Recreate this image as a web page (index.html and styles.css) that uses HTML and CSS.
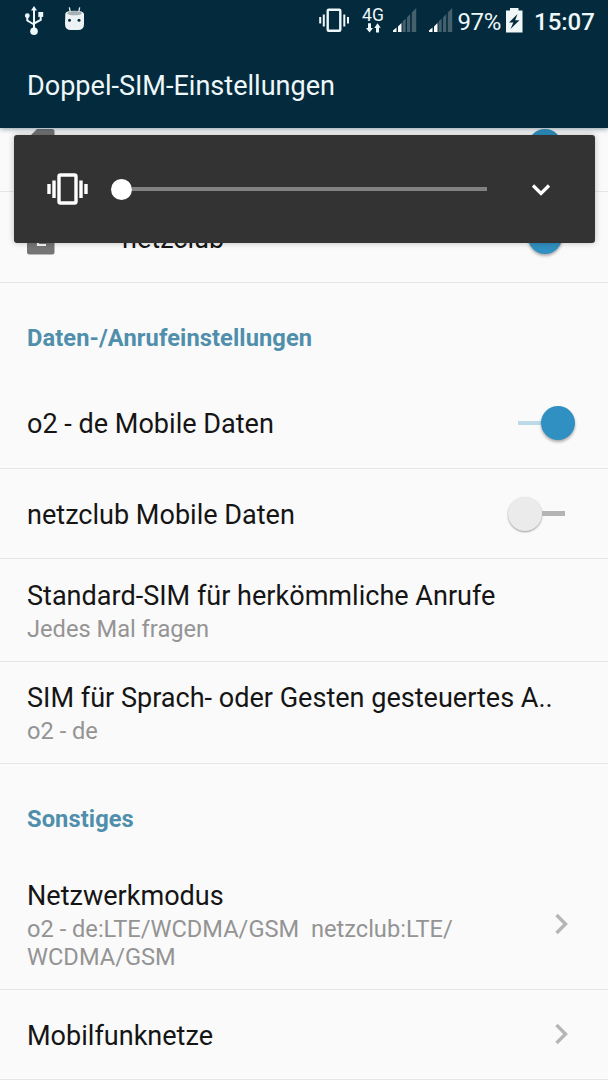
FILE: index.html
```html
<!DOCTYPE html>
<html lang="de">
<head>
<meta charset="utf-8">
<title>Doppel-SIM-Einstellungen</title>
<link rel="stylesheet" href="styles.css">
</head>
<body>
<div class="screen">
  <header class="appbar">
    <div class="status">
      <svg class="usb" width="20" height="32" viewBox="24 5 20 32">
        <g fill="none" stroke="#eef8fa" stroke-width="2">
          <path d="M34 9V30"/><path d="M27.3 16V20.5L34 24.5M40.7 15V20L34 23.5"/>
        </g>
        <g fill="#eef8fa"><path d="M34 6L37 10.5H31Z"/><circle cx="27.3" cy="15.7" r="2.4"/><path d="M38.3 12h4.9v4.9h-4.9z"/><circle cx="34" cy="31.2" r="3.8"/></g>
      </svg>
      <svg class="droid" width="22" height="26" viewBox="63 6 22 26">
        <path d="M69.3 7.3L70.3 12M79.7 7.3L78.7 12" stroke="#e6eef0" stroke-width="1.3"/>
        <path d="M65.3 14Q65.3 10.8 74.4 10.8T84 14V24Q84 30 78 30H71Q65 30 65 24Z" fill="#edf3f4"/>
        <ellipse cx="74.5" cy="13.2" rx="7.4" ry="2.1" fill="#a5b1b6"/>
        <circle cx="69.5" cy="20.3" r="1.5" fill="#062b3d"/><circle cx="79" cy="20.3" r="1.5" fill="#062b3d"/>
      </svg>
      <svg class="vib" width="32" height="26" viewBox="318 8 32 26">
        <rect x="327.7" y="9.7" width="12.6" height="21" rx="1" fill="none" stroke="#eef8fa" stroke-width="2.4"/>
        <path d="M323.8 14.5v12M320.2 17v6.5M344.3 14.5v12M348 17v6.5" stroke="#eef8fa" stroke-width="2"/>
      </svg>
      <div class="net">
        <span>4G</span>
        <svg width="16" height="10" viewBox="364 22.5 16 10"><path d="M367 22.7h3v4.700h2L368.500 32 365 27.400h2zM375 32h3v-4.700h1.700L376.500 22.700 373.300 27.400H375z" fill="#eef8fa"/></svg>
      </div>
      <svg class="sig" width="26" height="26" viewBox="392 7 26 26">
        <path d="M393 32v-1.500l3.500-3v4.500zM398 32v-5.500l3.500-3.500V32z" fill="#fff"/>
        <path d="M402.500 32V21.500l3.200-3v13.500zM407 32V17.500l3.200-3.500v18zM411.800 32V12.500l4.400-4.500v24z" fill="#44606d"/>
      </svg>
      <svg class="sig sig2" width="26" height="26" viewBox="392 7 26 26">
        <path d="M393 32v-1.500l3.500-3v4.500zM398 32v-5.500l3.500-3.500V32z" fill="#fff"/>
        <path d="M402.500 32V21.500l3.200-3v13.500zM407 32V17.500l3.200-3.500v18zM411.800 32V12.500l4.400-4.500v24z" fill="#44606d"/>
      </svg>
      <span class="pct">97%</span>
      <svg class="bat" width="17" height="26" viewBox="506 8 17 26">
        <path d="M506 10.500h4V8h8.500v2.500h4V32.500H506z" fill="#f0f7f8"/>
        <path d="M517.500 14L509 22.500h4.300L510.500 29l9-8.700h-4.300z" fill="#062b3d"/>
      </svg>
      <span class="time">15:07</span>
    </div>
    <h1>Doppel-SIM-Einstellungen</h1>
  </header>

  <main class="list">
    <div class="row sim">
      <svg class="card" width="28" height="35" viewBox="0 0 28 35"><path d="M10 0H25Q27.500 0 27.500 2.500V32Q27.500 34.500 25 34.500H2.500Q0 34.500 0 32V10Z" fill="#757575"/></svg>
      <span class="name"></span>
      <span class="switch on lone"><i class="thumb"></i></span>
    </div>
    <div class="row sim">
      <svg class="card" width="28" height="35" viewBox="0 0 28 35"><path d="M10 0H25Q27.500 0 27.500 2.500V32Q27.500 34.500 25 34.500H2.500Q0 34.500 0 32V10Z" fill="#757575"/><path d="M10 14H18V19.500H11V25H19" fill="none" stroke="#fafafa" stroke-width="2.200"/></svg>
      <span class="name">netzclub</span>
      <span class="switch on lone"><i class="thumb"></i></span>
    </div>
    <h2>Daten-/Anrufeinstellungen</h2>
    <div class="row first"><span class="name">o2 - de Mobile Daten</span><span class="switch on"><i class="track"></i><i class="thumb"></i></span></div>
    <div class="row"><span class="name">netzclub Mobile Daten</span><span class="switch off"><i class="thumb"></i><i class="track"></i></span></div>
    <div class="row two"><div><div class="name">Standard-SIM für herkömmliche Anrufe</div><div class="sub">Jedes Mal fragen</div></div></div>
    <div class="row two second"><div><div class="name">SIM für Sprach- oder Gesten gesteuertes A..</div><div class="sub">o2 - de</div></div></div>
    <h2 class="other">Sonstiges</h2>
    <div class="row three"><div><div class="name">Netzwerkmodus</div><div class="sub">o2 - de:LTE/WCDMA/GSM&nbsp; netzclub:LTE/<br>WCDMA/GSM</div></div>
      <svg class="arrow" width="14" height="22" viewBox="0 0 14 22"><path d="M1.500 2L10.500 11L1.500 20" fill="none" stroke="#b5b5b5" stroke-width="3.400"/></svg></div>
    <div class="row"><span class="name">Mobilfunknetze</span>
      <svg class="arrow" width="14" height="22" viewBox="0 0 14 22"><path d="M1.500 2L10.500 11L1.500 20" fill="none" stroke="#b5b5b5" stroke-width="3.400"/></svg></div>
  </main>

  <section class="volume">
    <svg width="42" height="32" viewBox="47 173 42 32">
      <rect x="59" y="175" width="17" height="28" rx="1.500" fill="none" stroke="#fff" stroke-width="3.400"/>
      <path d="M54 180.500v17.500M49 184v10M81 180.500v17.500M86 184v10" stroke="#fff" stroke-width="3.400"/>
    </svg>
    <div class="slider"><i class="knob"></i><i class="bar"></i></div>
    <svg class="down" width="20" height="14" viewBox="0 0 20 14"><path d="M2 2.500L10 10.500L18 2.500" fill="none" stroke="#fff" stroke-width="3.200"/></svg>
  </section>
</div>
</body>
</html>
```
FILE: styles.css
```css
* { box-sizing: border-box; }
body { margin: 0; font-family: Roboto, "Noto Sans", sans-serif; background: #fafafa; }
svg { display: block; flex: none; }
.screen { position: relative; width: 608px; height: 1080px; overflow: hidden; display: flex; flex-direction: column; background: #fafafa; }
.appbar { position: relative; z-index: 1; flex: none; height: 128px; background: #042b3d; color: #eef8fa; box-shadow: 0 1px 5px rgba(4, 43, 61, .45); }
.status { display: flex; align-items: flex-start; height: 42px; }
.usb { margin: 5px 0 0 24px; }
.droid { margin: 6px 0 0 19px; }
.vib { margin: 8px 0 0 233px; }
.net { display: flex; flex-direction: column; align-items: center; width: 22px; margin: 6.500px 0 0 12px; font-size: 17.500px; line-height: 16px; }
.sig { margin: 7px 0 0 8px; }
.sig2 { margin-left: 9.500px; }
.pct { margin: 8px 0 0 4px; width: 44px; font-size: 24px; line-height: 28px; letter-spacing: -.4px; white-space: nowrap; }
.bat { margin: 8px 0 0 4.500px; }
.time { margin: 8px 0 0 11px; font-size: 24px; line-height: 28px; font-weight: 500; letter-spacing: 0; }
h1 { margin: 27px 0 0 27px; font-size: 27.050px; line-height: 34px; font-weight: 400; white-space: nowrap; }
.list { flex: none; margin-top: -27px; }
.row { display: flex; align-items: center; justify-content: space-between; height: 90px; padding: 0 33px 0 27px; border-bottom: 1px solid #e6e6e6; }
.name { padding-top: 2px; font-size: 27.050px; line-height: 32px; color: #151515; white-space: nowrap; }
.sub { font-size: 23.650px; line-height: 28px; color: #949494; white-space: nowrap; }
.sim { height: 91px; padding-right: 46px; }
.sim .name { flex: 1; margin-left: 67px; padding-top: 3px; }
.row.first { height: 91px; }
.switch { display: flex; align-items: center; flex: none; }
.thumb { width: 34px; height: 34px; border-radius: 50%; }
.on .thumb { background: #3090c1; box-shadow: 0 2px 3px rgba(0, 0, 0, .32); }
.off .thumb { background: #ebebeb; box-shadow: 0 1px 2px rgba(0, 0, 0, .38); }
.track { width: 23px; height: 4.500px; }
.on .track { background: #bcdae8; }
.off .track { background: #b4b4b4; }
.off { margin-right: 10px; }
h2 { margin: 0; height: 95px; padding: 40px 27px 0; font-size: 23.650px; line-height: 30px; font-weight: 700; letter-spacing: .1px; color: #508fab; white-space: nowrap; }
.other { height: 96px; }
.two { height: 103px; }
.two.second { height: 102px; }
.two .name { margin-bottom: 3px; }
.three .name { padding-top: 1px; margin-bottom: 3px; }
.three { height: 130px; }
.arrow { margin: -1px 6px 0 0; }
.volume { position: absolute; z-index: 2; left: 13.500px; top: 135px; width: 581px; height: 108px; border-radius: 3px; background: #333; display: flex; align-items: center; padding-left: 33.500px; box-shadow: 0 0 6px rgba(0, 0, 0, .25); }
.slider { display: flex; align-items: center; width: 376px; margin-left: 22px; }
.knob { width: 21px; height: 21px; border-radius: 50%; background: #fff; }
.bar { flex: 1; height: 3.500px; background: #828282; }
.down { margin: 2px 0 0 43.500px; }
```
